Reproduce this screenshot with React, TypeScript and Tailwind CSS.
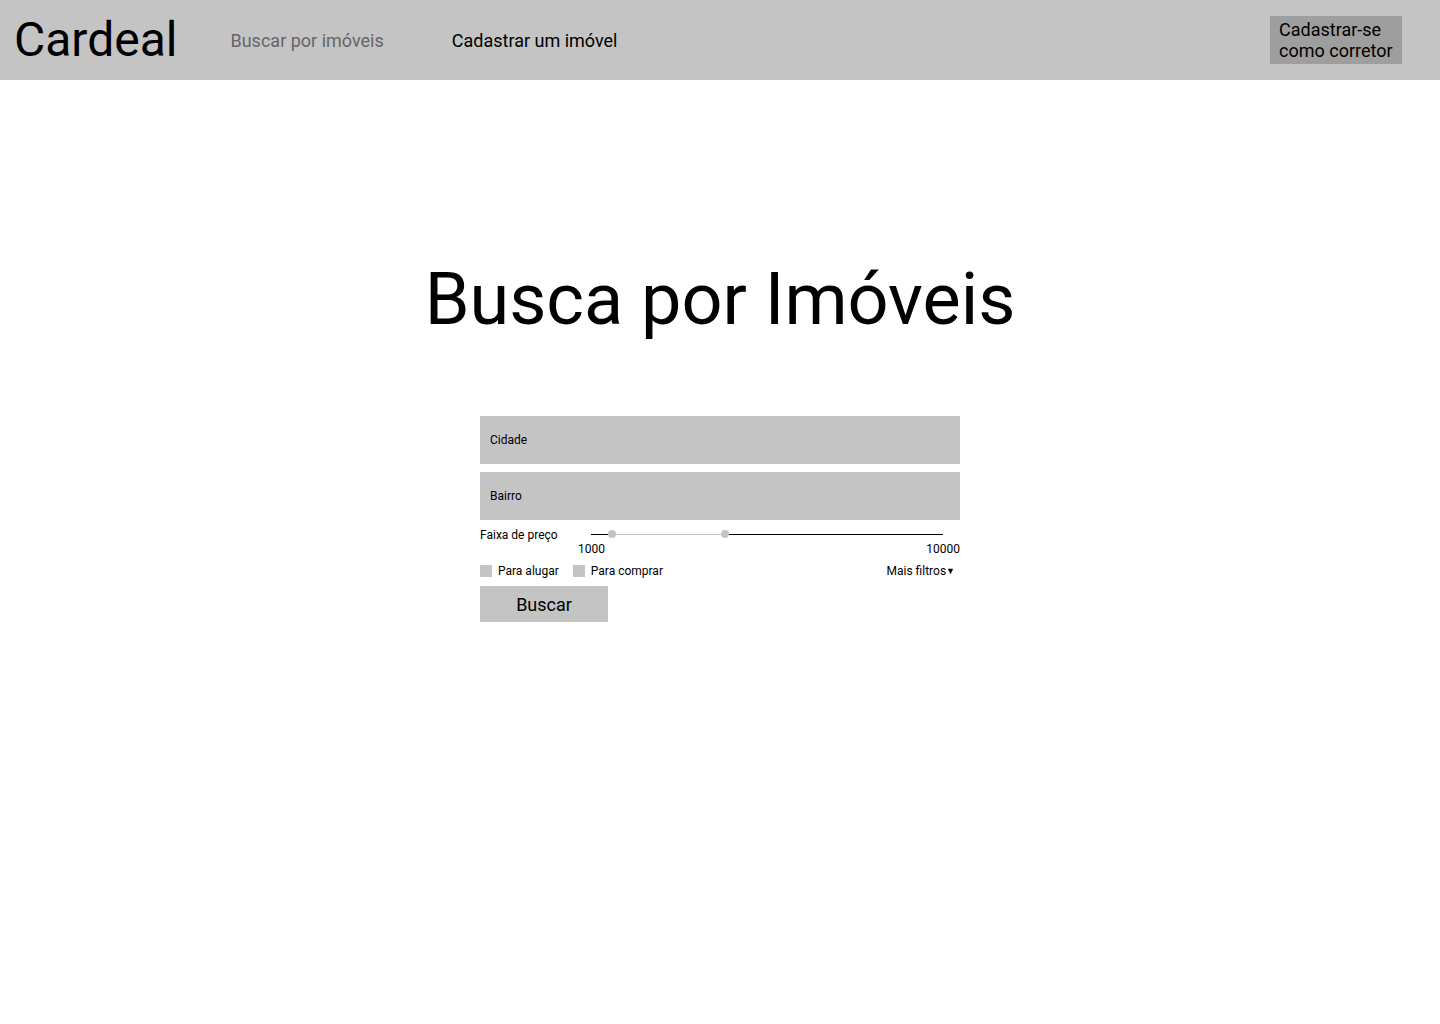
import React from 'react';

const font = { fontFamily: 'Roboto, "Noto Sans", sans-serif' };

function Header() {
  return (
    <header className="flex h-20 items-center bg-[#c4c4c4] pl-[14px] pr-[38px]">
      <span className="text-[48px] leading-none text-black">Cardeal</span>
      <nav className="ml-[53px] flex items-center gap-[68px] text-[18px]">
        <a className="text-[#666666]">Buscar por imóveis</a>
        <a className="text-black">Cadastrar um imóvel</a>
      </nav>
      <button
        type="button"
        className="ml-auto h-12 w-[132px] bg-[#9e9e9e] pl-[9px] text-left text-[18px] leading-[21px] text-black"
      >
        Cadastrar-se como corretor
      </button>
    </header>
  );
}

function Campo({ label }: { label: string }) {
  return (
    <div className="flex h-12 items-center bg-[#c4c4c4] px-[10px] text-[12px] text-black">{label}</div>
  );
}

function Faixa() {
  return (
    <div className="relative h-[42px] text-[12px] leading-[18px] text-black">
      <span className="absolute left-0 top-[6px]">Faixa de preço</span>
      <div className="absolute left-[111px] right-[17px] top-[14px] h-px bg-black" />
      <div className="absolute left-[132px] top-[14px] h-px w-[113px] bg-[#c4c4c4]" />
      <div className="absolute left-[128px] top-[10px] h-2 w-2 rounded-full bg-[#c4c4c4]" />
      <div className="absolute left-[241px] top-[10px] h-2 w-2 rounded-full bg-[#c4c4c4]" />
      <span className="absolute left-[98px] top-[20px]">1000</span>
      <span className="absolute right-0 top-[20px]">10000</span>
    </div>
  );
}

function Check({ label }: { label: string }) {
  return (
    <label className="flex items-center gap-[6px] text-[12px] leading-[18px] text-black">
      <span className="h-3 w-3 bg-[#c4c4c4]" />
      {label}
    </label>
  );
}

export default function App() {
  return (
    <div className="min-h-[1024px] bg-white" style={font}>
      <Header />
      <main className="flex flex-col items-center">
        <h1 className="mt-[178px] text-[72px] leading-[84px] text-black">Busca por Imóveis</h1>
        <form className="mt-[74px] flex w-[480px] flex-col" onSubmit={(e) => e.preventDefault()}>
          <Campo label="Cidade" />
          <div className="h-2" />
          <Campo label="Bairro" />
          <Faixa />
          <div className="flex h-[18px] items-center justify-between">
            <div className="flex items-center gap-[14px]">
              <Check label="Para alugar" />
              <Check label="Para comprar" />
            </div>
            <span className="mr-[5px] flex items-center text-[12px] leading-[18px] text-black">
              Mais filtros
              <span className="text-[9px] leading-none">▼</span>
            </span>
          </div>
          <button
            type="submit"
            className="mt-[6px] h-9 w-32 bg-[#c4c4c4] text-[18px] text-black"
          >
            Buscar
          </button>
        </form>
      </main>
    </div>
  );
}
